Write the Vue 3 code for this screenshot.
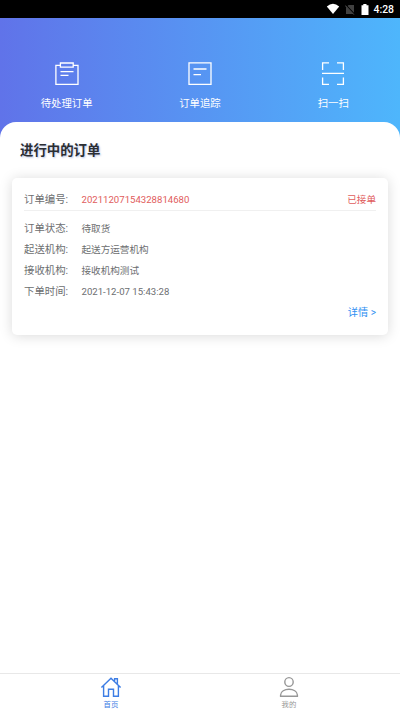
<script setup>
const details = [
  ['订单状态:', '待取货'],
  ['起送机构:', '起送方运营机构'],
  ['接收机构:', '接收机构测试'],
  ['下单时间:', '2021-12-07 15:43:28'],
]
</script>

<template>
  <div class="screen">
    <div class="statusbar">
      <svg class="wifi" width="14" height="12" viewBox="0 0 14 12"><path d="M.8 3.4Q7-1.7 13.2 3.4L7 11Z" fill="#fff" /></svg>
      <svg class="sim" width="10" height="11" viewBox="0 0 10 11"><path d="M3.6 1H9v9H1V3.6Z" fill="#414141" /><path d="M.5 1l9 9.5" stroke="#000" stroke-width="1.8" /><path d="M.2 1.5l8.6 9" stroke="#686868" stroke-width=".9" /></svg>
      <svg class="battery" width="8" height="11" viewBox="0 0 8 11"><path d="M2.3 0h3.2v1.2H7.5V11H.5V1.2h1.8Z" fill="#fff" /></svg>
      <span class="clock">4:28</span>
    </div>
    <header class="actions">
      <div class="action">
        <svg width="26" height="26" viewBox="0 0 26 26"><path d="M5.8 4.3H1.9V23.3H24V4.3H19.5M6.4 2H19.2v4.2H6.4ZM6.5 10.6H19.5M6.5 14.3H14.5" /></svg>
        <span>待处理订单</span>
      </div>
      <div class="action">
        <svg width="26" height="26" viewBox="0 0 26 26"><path d="M2 1.8H24V23.4H2ZM6.5 8H19.5M6.5 13.6H14" /></svg>
        <span>订单追踪</span>
      </div>
      <div class="action">
        <svg width="26" height="26" viewBox="0 0 26 26"><path d="M2.6 9V1.8H9M17 1.8H23.4V9M2 12.3H24M2.6 16.5V23.4H9M17 23.4H23.4V16.5" /></svg>
        <span>扫一扫</span>
      </div>
    </header>
    <main class="sheet">
      <h1>进行中的订单</h1>
      <section class="card">
        <div class="row head">
          <span class="label">订单编号:</span>
          <span class="value red">20211207154328814680</span>
          <span class="state red">已接单</span>
        </div>
        <div class="details">
          <div v-for="d in details" :key="d[0]" class="row">
            <span class="label">{{ d[0] }}</span>
            <span class="value">{{ d[1] }}</span>
          </div>
        </div>
        <div class="more">详情 &gt;</div>
      </section>
    </main>
    <nav class="tabs">
      <div class="tab active">
        <svg width="22" height="22" viewBox="0 0 22 22"><path d="M1.4 11.4 11 2.2 20.6 11.4M3.6 9.6V20.3H8.5V13.2H13.5V20.3H18.4V9.6M14.6 5V2.8H17.4V7.8" /></svg>
        <span>首页</span>
      </div>
      <div class="tab">
        <svg width="22" height="22" viewBox="0 0 22 22"><ellipse cx="11" cy="6" rx="4.2" ry="4.4" /><path d="M2.6 20.2V19C2.6 11.4 19.4 11.4 19.4 19V20.2Z" /></svg>
        <span>我的</span>
      </div>
    </nav>
  </div>
</template>

<style>
body { margin: 0; }
</style>
<style scoped>
.screen {
  width: 400px;
  height: 711px;
  display: flex;
  flex-direction: column;
  overflow: hidden;
  background: linear-gradient(90deg, #6073e9, #4eb6fc);
  font-family: Roboto, "Noto Sans CJK SC", sans-serif;
}
.statusbar {
  height: 18px;
  flex: none;
  background: #000;
  display: flex;
  align-items: center;
  justify-content: flex-end;
  padding-right: 6px;
  box-sizing: border-box;
  color: #fff;
}
.wifi { margin-right: 5px; }
.sim { margin-right: 6px; }
.battery { margin-right: 5px; }
.clock { font-size: 10.4px; font-weight: 500; line-height: 16px; padding-top: 2px; }
.actions {
  height: 104px;
  flex: none;
  display: flex;
  box-sizing: border-box;
  padding-top: 43px;
}
.action {
  flex: 1;
  display: flex;
  flex-direction: column;
  align-items: center;
  color: #fff;
  font-size: 10.4px;
  line-height: 16px;
}
.action svg {
  margin-bottom: 9px;
  fill: none;
  stroke: #fff;
  stroke-width: 1.3;
}
.sheet {
  flex: 1;
  background: #fff;
  border-radius: 16px 16px 0 0;
  padding: 18px 12px 0;
}
h1 {
  margin: 0 0 16px 8px;
  font-size: 13.4px;
  line-height: 22px;
  font-weight: 700;
  color: #2b2e33;
  text-shadow: 1px 1px 2px #b9c5e6;
}
.card {
  height: 157px;
  box-sizing: border-box;
  padding: 11px 12px 0 12px;
  border-radius: 5px;
  background: #fff;
  box-shadow: 0 1px 13px rgba(0, 0, 0, .15);
}
.row {
  display: flex;
  height: 21px;
  line-height: 21px;
  color: #6c6e70;
}
.head {
  border-bottom: 1px solid #f0f0f0;
  margin-bottom: 7px;
}
.label { width: 57.5px; font-size: 10.4px; }
.value { font-size: 9.6px; }
.red { color: #df5c5c; }
.state { margin-left: auto; font-size: 9.6px; }
.more {
  text-align: right;
  font-size: 10.2px;
  line-height: 22px;
  color: #2f8ff2;
}
.tabs {
  height: 38px;
  flex: none;
  box-sizing: border-box;
  border-top: 1px solid #e8e8e8;
  background: #fff;
  display: flex;
  padding: 2px 22px 0;
}
.tab {
  flex: 1;
  display: flex;
  flex-direction: column;
  align-items: center;
  color: #979797;
  font-size: 7.4px;
  line-height: 12px;
}
.tab svg {
  margin-bottom: 1px;
  fill: none;
  stroke: currentColor;
  stroke-width: 1.4;
}
.active { color: #3d7de4; }
</style>
